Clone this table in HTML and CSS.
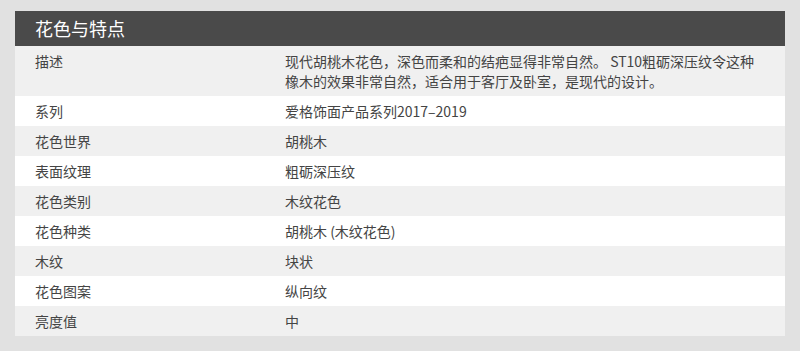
FILE: index.html
```html
<!DOCTYPE html>
<html lang="zh">
<head>
<meta charset="utf-8">
<title>花色与特点</title>
<link rel="stylesheet" href="styles.css">
</head>
<body>
<section class="panel">
  <h2 class="panel-title">花色与特点</h2>
  <div class="spec">
    <div class="row"><div class="label">描述</div><div class="value">现代胡桃木花色，深色而柔和的结疤显得非常自然。 ST10粗砺深压纹令这种<br>橡木的效果非常自然，适合用于客厅及卧室，是现代的设计。</div></div>
    <div class="row"><div class="label">系列</div><div class="value">爱格饰面产品系列2017–2019</div></div>
    <div class="row"><div class="label">花色世界</div><div class="value">胡桃木</div></div>
    <div class="row"><div class="label">表面纹理</div><div class="value">粗砺深压纹</div></div>
    <div class="row"><div class="label">花色类别</div><div class="value">木纹花色</div></div>
    <div class="row"><div class="label">花色种类</div><div class="value">胡桃木 (木纹花色)</div></div>
    <div class="row"><div class="label">木纹</div><div class="value">块状</div></div>
    <div class="row"><div class="label">花色图案</div><div class="value">纵向纹</div></div>
    <div class="row"><div class="label">亮度值</div><div class="value">中</div></div>
  </div>
</section>
</body>
</html>
```
FILE: styles.css
```css
html, body {
  margin: 0;
  background: #e1e1e1;
}
body {
  padding: 11px 15px 15px;
  font-family: "Noto Sans CJK SC", "Noto Sans", sans-serif;
  color: #444;
}
.panel {
  background: #fff;
}
.panel-title {
  margin: 0;
  height: 35px;
  line-height: 35px;
  padding-left: 20px;
  background: #4a4a4a;
  color: #fff;
  font-size: 18px;
  font-weight: normal;
}
.row {
  display: grid;
  grid-template-columns: 250px 1fr;
  padding: 5px 20px;
  font-size: 14px;
  line-height: 20px;
}
.row:nth-child(odd) {
  background: #f0f0f0;
}
.row:nth-child(even) {
  background: #fff;
}
```
